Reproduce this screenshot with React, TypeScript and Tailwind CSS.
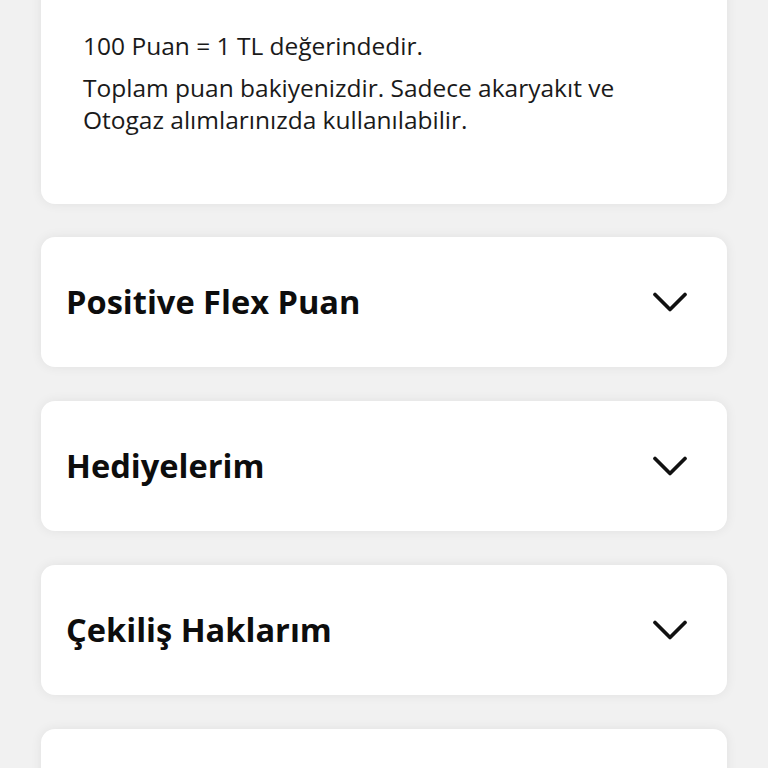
import React from "react";

function Chevron() {
  return (
    <svg width="36" height="22" viewBox="0 0 36 22" fill="none" className="shrink-0 translate-y-[1px]">
      <path d="M3 2.5 L18 17.5 L33 2.5" stroke="#111" strokeWidth="3.7" strokeLinecap="round" strokeLinejoin="round" />
    </svg>
  );
}

function Item({ title }: { title: string }) {
  return (
    <div className="flex h-[130px] items-center justify-between rounded-[14px] bg-white pl-[25px] pr-[39px] shadow-[0_0_12px_rgba(0,0,0,0.07)]">
      <span className="text-[32.6px] font-bold leading-none text-[#0d0d0d]">{title}</span>
      <Chevron />
    </div>
  );
}

export default function App() {
  return (
    <div
      className="min-h-[768px] h-[768px] overflow-hidden bg-[#f1f1f1] px-[41px]"
      style={{ fontFamily: '"Open Sans", "Noto Sans", sans-serif' }}
    >
      <div className="-mt-[20px] flex flex-col gap-[33.7px]">
        <div className="rounded-[14px] bg-white pb-[67.8px] pl-[42px] pr-[30px] pt-[50px] text-[24.5px] leading-[32px] text-[#1a1a1a] shadow-[0_0_12px_rgba(0,0,0,0.07)]">
          <p>100 Puan = 1 TL değerindedir.</p>
          <p className="mt-[10px]">
            Toplam puan bakiyenizdir. Sadece akaryakıt ve
            <br />
            Otogaz alımlarınızda kullanılabilir.
          </p>
        </div>
        <Item title="Positive Flex Puan" />
        <Item title="Hediyelerim" />
        <Item title="Çekiliş Haklarım" />
        <div className="h-[130px] rounded-[14px] bg-white shadow-[0_0_12px_rgba(0,0,0,0.07)]" />
      </div>
    </div>
  );
}
